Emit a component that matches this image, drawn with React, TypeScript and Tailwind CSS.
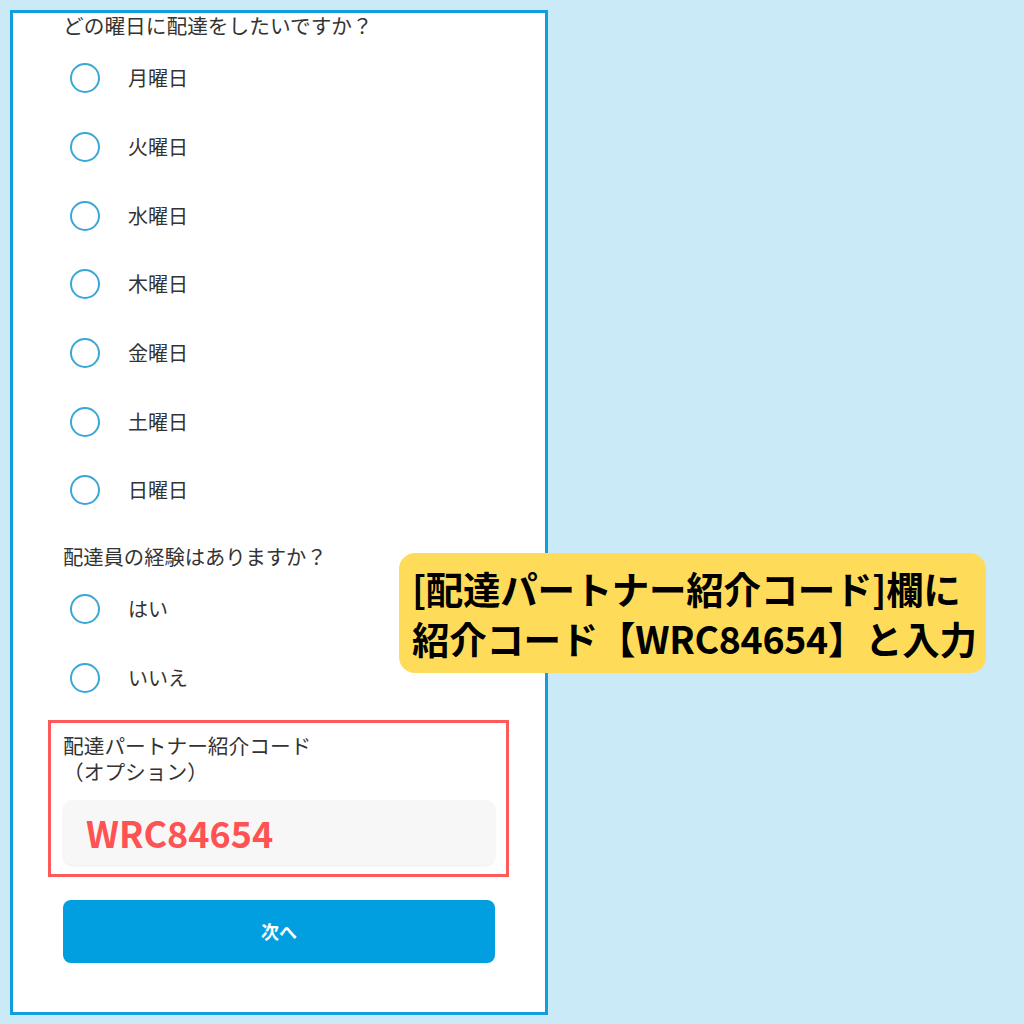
import React from "react";

const days = ["月曜日", "火曜日", "水曜日", "木曜日", "金曜日", "土曜日", "日曜日"];
const exp = ["はい", "いいえ"];

function Radio({ label }: { label: string }) {
  return (
    <div className="flex h-[68.67px] items-center">
      <div className="ml-[7px] h-[30px] w-[30px] rounded-full border-2 border-[#3aa7d6]" />
      <span className="ml-[28px] text-[20px] leading-[24px] text-[#333333]">{label}</span>
    </div>
  );
}

export default function App() {
  const font = { fontFamily: '"Noto Sans CJK JP", "Noto Sans", sans-serif' };
  return (
    <div className="relative h-[1024px] w-[1024px] overflow-hidden bg-[#cbeaf7] p-[10px]" style={font}>
      <div className="h-[1005px] w-[538px] overflow-hidden border-[3px] border-[#129ddf] bg-white px-[50px]">
        <div className="text-[20.7px] leading-[24px] text-[#333333]">どの曜日に配達をしたいですか？</div>
        <div className="mt-[7px]">
          {days.map((d) => (
            <Radio key={d} label={d} />
          ))}
        </div>
        <div className="mt-[19px] text-[20.3px] leading-[24px] text-[#333333]">配達員の経験はありますか？</div>
        <div className="mt-[7px]">
          {exp.map((d) => (
            <Radio key={d} label={d} />
          ))}
        </div>
        <div className="relative mt-[20px]">
          <div className="absolute -left-[15px] -right-[14px] -top-[12px] -bottom-[12px] border-[3px] border-[#ff5a5a]" />
          <div className="text-[20.7px] leading-[26px] text-[#333333]">
            <div>配達パートナー紹介コード</div>
            <div>（オプション）</div>
          </div>
          <div className="mt-[16px] flex h-[65px] items-center rounded-[10px] bg-[#f7f7f7] pl-[23px] shadow-[0_1px_3px_rgba(0,0,0,0.08)]">
            <span className="text-[36px] font-bold leading-none text-[#ff5252]">WRC84654</span>
          </div>
        </div>
        <div className="mt-[35px] flex h-[63px] items-center justify-center rounded-[8px] bg-[#029fe0]">
          <span className="text-[18px] font-bold text-white">次へ</span>
        </div>
      </div>
      <div className="absolute left-[399px] top-[553px] w-[587px] rounded-[16px] bg-[#fedc5a] py-[10px] pl-[13px]">
        <div className="text-[37.5px] font-bold leading-[50px] tracking-[-0.3px] text-black">
          <div>[配達パートナー紹介コード]欄に</div>
          <div>紹介コード【WRC84654】と入力</div>
        </div>
      </div>
    </div>
  );
}
